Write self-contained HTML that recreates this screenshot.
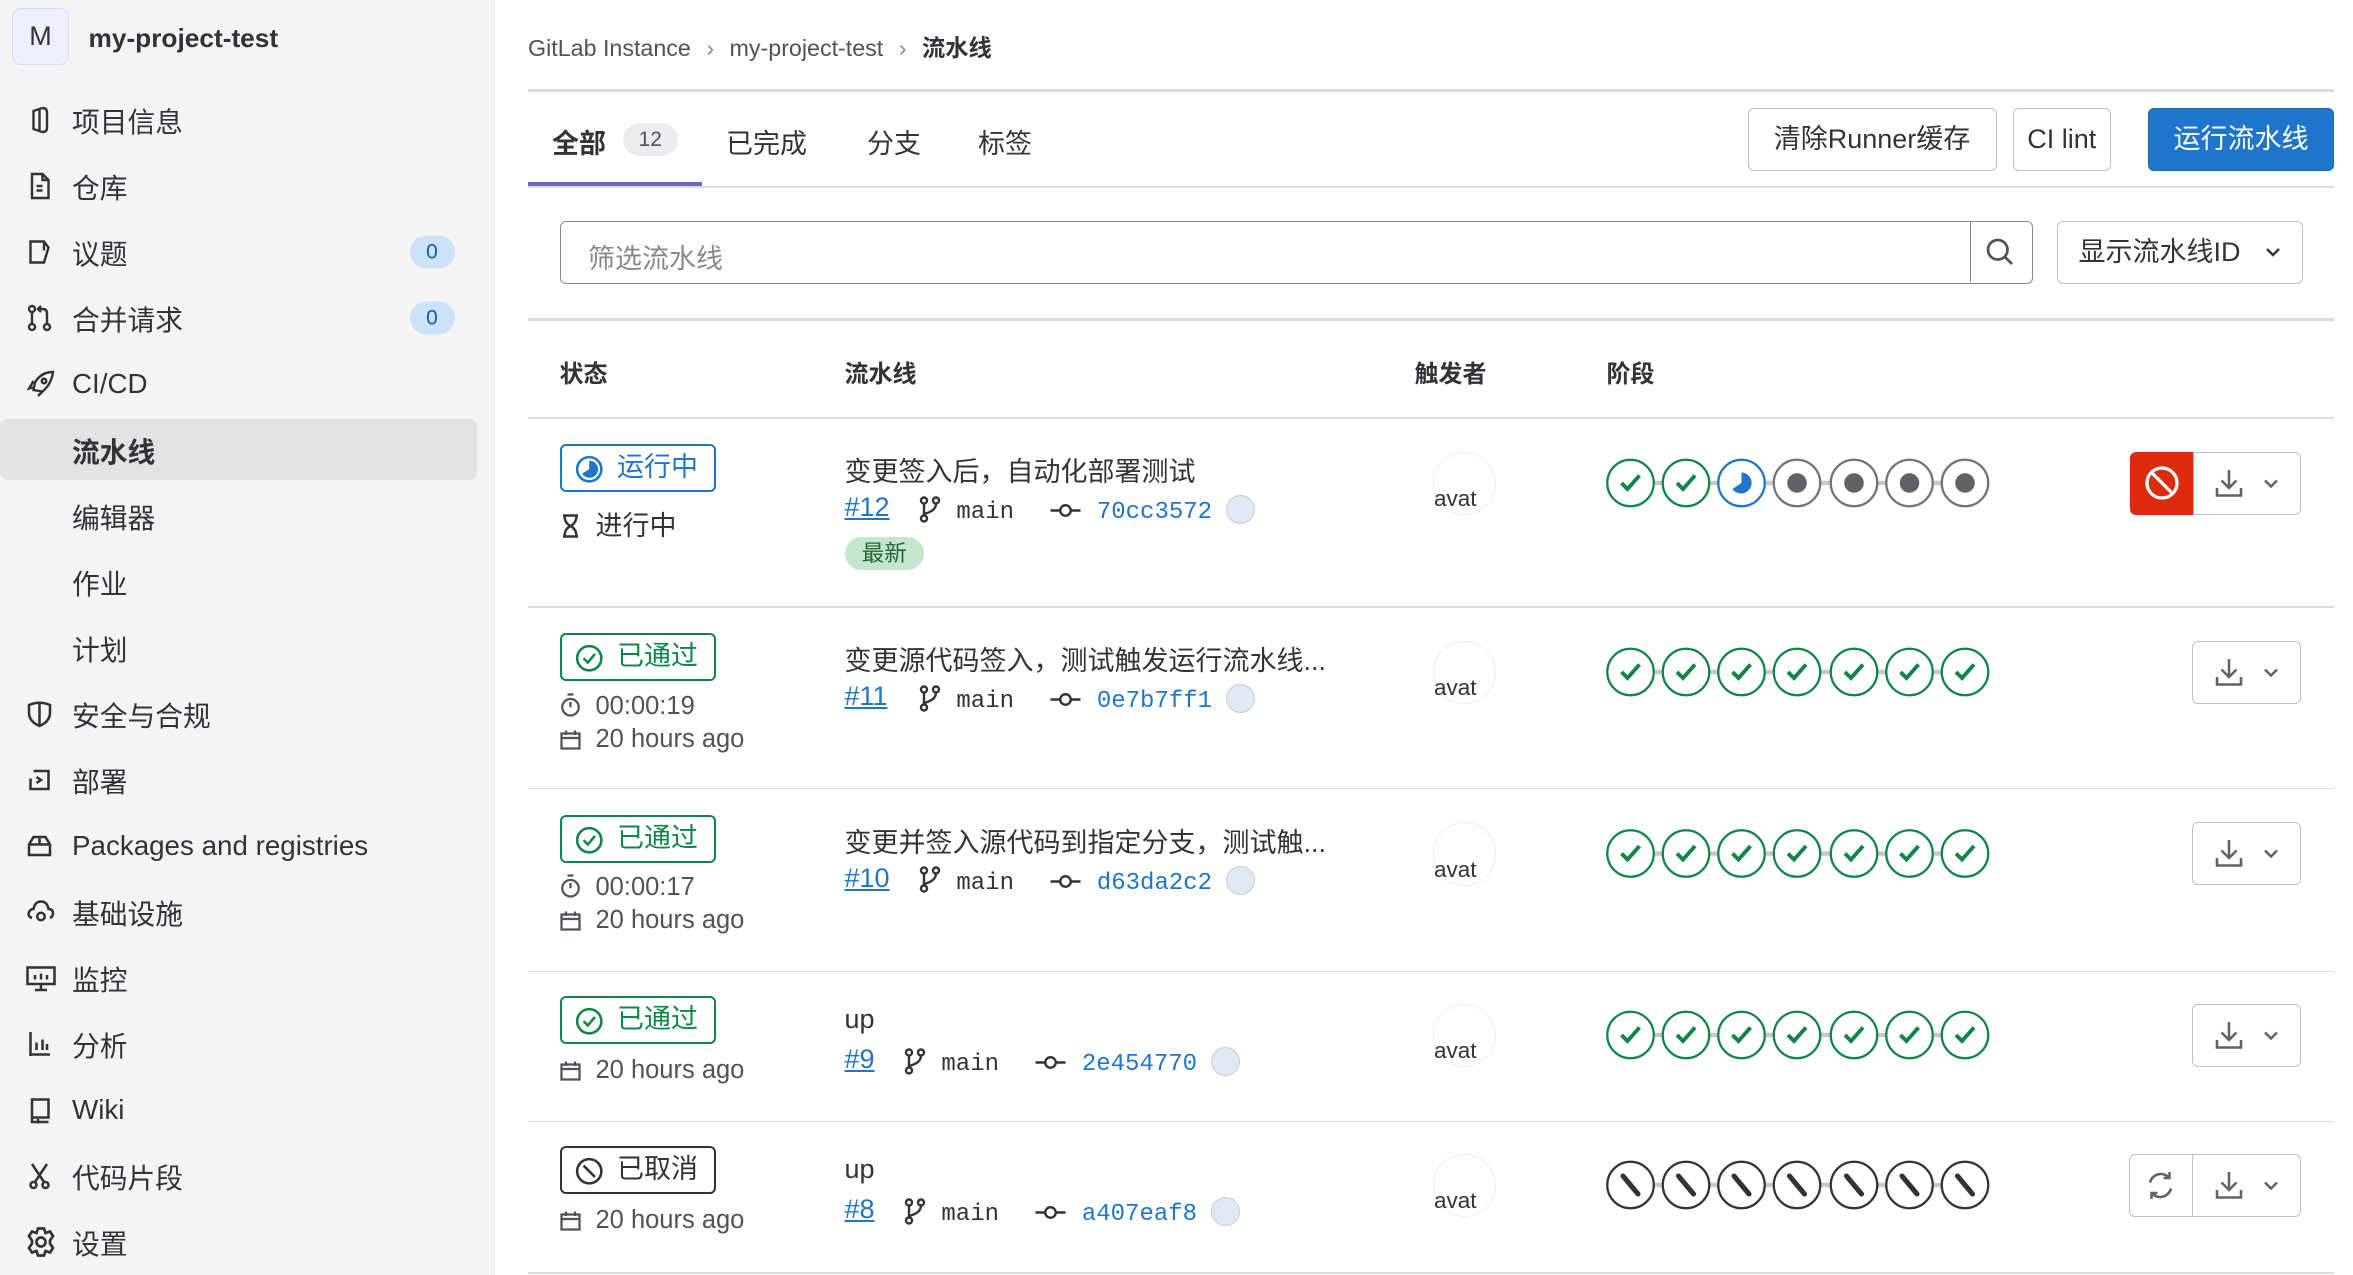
<!DOCTYPE html>
<html><head><meta charset="utf-8">
<style>
html{zoom:1.5}
body{margin:0;width:1569px;height:850px;overflow:hidden;background:#fff;font-family:"Liberation Sans","Noto Sans CJK SC",sans-serif;color:#333238;position:relative}
.a{position:absolute;white-space:nowrap}
.sb{position:absolute;left:0;top:0;width:329px;height:850px;background:#f4f4f4;border-right:1px solid #e8e8e8}
.nav{position:absolute;left:48px;font-size:18.5px;color:#333238;transform:translateY(-50%)}
.ic{position:absolute;left:17px;transform:translateY(-50%)}
.badge0{position:absolute;left:273px;width:30px;height:22px;border-radius:11px;background:#cbe2f9;color:#0b5cad;font-size:14px;text-align:center;line-height:22px;transform:translateY(-50%)}
.btn{position:absolute;border:1px solid #bfbfc3;border-radius:4px;background:#fff;font-size:18px;text-align:center;box-sizing:border-box}
.hl{position:absolute;left:352px;width:1204px;height:1px;background:#dcdcde}
.th{position:absolute;top:236px;font-size:16px;font-weight:bold}
.st{position:absolute;left:373px;width:104px;height:32px;box-sizing:border-box;border:1.5px solid;border-radius:4px;font-size:18px;line-height:29px}
.st svg{position:absolute;left:9px;top:6px}
.st span{position:absolute;left:37px}
.meta{position:absolute;left:373px;font-size:17px;color:#535158}
.meta svg{vertical-align:-2px;margin-right:10px}
.ttl{position:absolute;left:563px;font-size:18px;color:#333238}
.lk{position:absolute;left:563px;font-size:16.5px}
.lk a{color:#1f75cb;text-decoration:underline;font-family:"Liberation Sans",sans-serif;font-size:18px}
.mono{font-family:"Liberation Mono",monospace;font-size:16px}
.av{position:absolute;left:955px;width:41px;height:41px;border-radius:50%;border:1px solid #eee;overflow:hidden;font-size:15px}
.dl{position:absolute;left:1461px;width:73px;height:42px;border:1px solid #bfbfc3;border-radius:4px;box-sizing:border-box;background:#fff}
.ab{display:inline-block;width:18px;height:18px;border-radius:50%;background:#dfe9f3;border:1px solid #ccc;vertical-align:-4px}
</style></head><body>

<div class="sb"></div>
<div class="a" style="left:8px;top:5px;width:38px;height:38px;border-radius:6px;background:#eeeefc;border:1px solid #dcdcf0;box-sizing:border-box;text-align:center;line-height:37px;font-size:18px;color:#333">M</div>
<div class="a" style="left:59px;top:15px;font-size:17.5px;font-weight:bold;color:#333238">my-project-test</div>
<div class="a" style="left:0;top:279px;width:318px;height:41px;background:#e3e3e3;border-radius:5px"></div>

<svg class="ic" style="top:80px" width="18" height="18" viewBox="0 0 18 18" fill="none" stroke="#333" stroke-width="1.6"><path d="M5 3 L11 1 Q14 1 14 4 V14 Q14 17 11 17 L5 15 Z M9 2 V16"/></svg><div class="nav" style="top:80px">项目信息</div>
<svg class="ic" style="top:124px" width="18" height="18" viewBox="0 0 18 18" fill="none" stroke="#333" stroke-width="1.6"><path d="M4 1 H11 L15 5 V17 H4 Z M11 1 V5 H15 M7 9 H11 M7 12 H11"/></svg><div class="nav" style="top:124px">仓库</div>
<svg class="ic" style="top:168px" width="18" height="18" viewBox="0 0 18 18" fill="none" stroke="#333" stroke-width="1.6"><path d="M3 2 H12 L15 6 L12 16 H3 Z M12 2 V8"/></svg><div class="nav" style="top:168px">议题</div><div class="badge0" style="top:168px">0</div>
<svg class="ic" style="top:212px" width="18" height="18" viewBox="0 0 18 18" fill="none" stroke="#333" stroke-width="1.6"><circle cx="4" cy="3" r="2"/><circle cx="4" cy="15" r="2"/><circle cx="14" cy="15" r="2"/><path d="M4 5 V13 M14 13 V6 Q14 3 11 3 H9 M10 1 L8 3 L10 5"/></svg><div class="nav" style="top:212px">合并请求</div><div class="badge0" style="top:212px">0</div>
<svg class="ic" style="top:256px" width="20" height="20" viewBox="0 0 20 20" fill="none" stroke="#333" stroke-width="1.6"><path d="M18 2 Q10 2 6 9 L5 14 L11 15 Q17 10 18 2 Z M6 12 L2 13 L5 8 M11 15 L8 18"/><circle cx="12" cy="8" r="1.5"/></svg><div class="nav" style="top:256px">CI/CD</div>
<div class="nav" style="top:300px;font-weight:bold">流水线</div>
<div class="nav" style="top:344px">编辑器</div>
<div class="nav" style="top:388px">作业</div>
<div class="nav" style="top:432px">计划</div>
<svg class="ic" style="top:476px" width="18" height="18" viewBox="0 0 18 18" fill="none" stroke="#333" stroke-width="1.7"><path d="M2 3 Q9 0 16 3 V8 Q16 14 9 17 Q2 14 2 8 Z M9 2 V16"/></svg><div class="nav" style="top:476px">安全与合规</div>
<svg class="ic" style="top:520px" width="18" height="18" viewBox="0 0 18 18" fill="none" stroke="#333" stroke-width="1.7"><path d="M5 3 H15 V15 H3 V8 M7 7 L10 9 L7 11"/></svg><div class="nav" style="top:520px">部署</div>
<svg class="ic" style="top:564px" width="18" height="18" viewBox="0 0 18 18" fill="none" stroke="#333" stroke-width="1.7"><path d="M2 8 L5 3 H13 L16 8 V15 H2 Z M2 8 H16 M9 3 V8"/></svg><div class="nav" style="top:564px">Packages and registries</div>
<svg class="ic" style="top:608px" width="20" height="18" viewBox="0 0 20 18" fill="none" stroke="#333" stroke-width="1.7"><path d="M4 13 Q1 12 2 9 Q3 7 5 7 Q6 2 10 2 Q14 2 15 7 Q18 7 18 10 Q18 12 16 13"/><circle cx="10" cy="12" r="2.5"/></svg><div class="nav" style="top:608px">基础设施</div>
<svg class="ic" style="top:652px" width="20" height="18" viewBox="0 0 20 18" fill="none" stroke="#333" stroke-width="1.7"><path d="M1 2 H19 V13 H1 Z M6 17 H14 M10 13 V17 M6 10 V7 M10 10 V6 M14 10 V7"/></svg><div class="nav" style="top:652px">监控</div>
<svg class="ic" style="top:696px" width="18" height="18" viewBox="0 0 18 18" fill="none" stroke="#333" stroke-width="1.7"><path d="M3 1 V17 M3 16 H16 M7 13 V8 M11 13 V6 M14 13 V9"/></svg><div class="nav" style="top:696px">分析</div>
<svg class="ic" style="top:740px" width="18" height="18" viewBox="0 0 18 18" fill="none" stroke="#333" stroke-width="1.7"><path d="M4 2 H15 V14 H4 Z M4 14 V17 H15 M8 15 V18"/></svg><div class="nav" style="top:740px">Wiki</div>
<svg class="ic" style="top:784px" width="18" height="18" viewBox="0 0 18 18" fill="none" stroke="#333" stroke-width="1.7"><path d="M4 1 L12 13 M14 1 L6 13"/><circle cx="5" cy="15" r="2"/><circle cx="13" cy="15" r="2"/></svg><div class="nav" style="top:784px">代码片段</div>
<svg class="ic" style="top:828px" width="20" height="20" viewBox="0 0 20 20" fill="none" stroke="#333" stroke-width="1.8"><path d="M8 1 H12 L13 4 L16 3 L18 6 L16 9 V11 L18 14 L16 17 L13 16 L12 19 H8 L7 16 L4 17 L2 14 L4 11 V9 L2 6 L4 3 L7 4 Z"/><circle cx="10" cy="10" r="3"/></svg><div class="nav" style="top:828px">设置</div>

<div class="a" style="left:352px;top:19px;font-size:15.5px;color:#535158">GitLab Instance <span style="color:#89888d;margin:0 6px">›</span> my-project-test <span style="color:#89888d;margin:0 6px">›</span> <b style="color:#333238">流水线</b></div>
<div class="hl" style="top:59px;height:2px"></div>

<div class="a" style="left:368px;top:81px;font-size:18px;font-weight:bold">全部</div>
<div class="a" style="left:415px;top:82px;width:37px;height:22px;border-radius:11px;background:#ececef;font-size:14px;text-align:center;line-height:22px;color:#535158">12</div>
<div class="a" style="left:484px;top:81px;font-size:18px">已完成</div>
<div class="a" style="left:578px;top:81px;font-size:18px">分支</div>
<div class="a" style="left:652px;top:81px;font-size:18px">标签</div>
<div class="a" style="left:352px;top:121px;width:116px;height:3px;background:#6666c4"></div>
<div class="hl" style="top:124px"></div>
<div class="btn" style="left:1165px;top:72px;width:166px;height:42px;line-height:40px">清除Runner缓存</div>
<div class="btn" style="left:1342px;top:72px;width:65px;height:42px;line-height:40px">CI lint</div>
<div class="btn" style="left:1432px;top:72px;width:124px;height:42px;line-height:40px;background:#1f75cb;border-color:#1068bf;color:#fff">运行流水线</div>

<div class="a" style="left:373px;top:147px;width:982px;height:42px;border:1px solid #89888d;border-radius:4px;box-sizing:border-box"></div>
<div class="a" style="left:1313px;top:148px;width:1px;height:40px;background:#89888d"></div>
<div class="a" style="left:392px;top:158px;font-size:18px;color:#89888d">筛选流水线</div>
<svg class="a" style="left:1323px;top:158px" width="20" height="20" viewBox="0 0 20 20" fill="none" stroke="#535158" stroke-width="1.8"><circle cx="8.5" cy="8.5" r="6.5"/><path d="M13 13 L18 18"/></svg>
<div class="btn" style="left:1371px;top:147px;width:164px;height:42px;line-height:40px;text-align:left;padding-left:14px">显示流水线ID</div>
<svg class="a" style="left:1509px;top:162px" width="12" height="12" viewBox="0 0 12 12" fill="none" stroke="#333" stroke-width="1.6"><path d="M2 4 L6 8 L10 4"/></svg>

<div class="hl" style="top:212px;height:2px"></div>
<div class="th" style="left:373px">状态</div>
<div class="th" style="left:563px">流水线</div>
<div class="th" style="left:943px">触发者</div>
<div class="th" style="left:1071px">阶段</div>
<div class="hl" style="top:278px"></div>
<div class="hl" style="top:404px"></div>
<div class="hl" style="top:525px"></div>
<div class="hl" style="top:647px"></div>
<div class="hl" style="top:747px"></div>
<div class="hl" style="top:848px"></div>

<div class="st" style="top:296px;border-color:#1f75cb;color:#1f75cb"><svg width="19" height="19" viewBox="0 0 20 20"><circle cx="10" cy="10" r="8.5" fill="none" stroke="#1f75cb" stroke-width="1.8"/><path d="M10 4 A6 6 0 1 1 5 13 L10 10 Z" fill="#1f75cb"/></svg><span>运行中</span></div>
<div class="meta" style="top:336px;font-size:18px;color:#333238"><svg width="14" height="16" viewBox="0 0 14 16" fill="none" stroke="#333" stroke-width="1.6"><path d="M2 1 H12 M2 15 H12 M3 1 Q3 6 7 8 Q11 10 11 15 M11 1 Q11 6 7 8 Q3 10 3 15"/></svg>进行中</div>
<div class="ttl" style="top:300px">变更签入后，自动化部署测试</div>
<div class="lk" style="top:328px"><a>#12</a></div>
<div class="a" style="left:563px;top:358px;width:53px;height:22px;border-radius:11px;background:#c3e6cd;color:#24663b;font-size:15px;text-align:center;line-height:22px">最新</div>
<div class="av" style="top:301px"></div>

<div class="st" style="top:422px;border-color:#108548;color:#108548"><svg width="19" height="19" viewBox="0 0 20 20" fill="none" stroke="#108548" stroke-width="1.8"><circle cx="10" cy="10" r="8.5"/><path d="M6 10 L9 13 L14 7"/></svg><span>已通过</span></div>
<div class="ttl" style="top:426px">变更源代码签入，测试触发运行流水线...</div>
<div class="lk" style="top:454px"><a>#11</a></div>
<div class="av" style="top:427px"></div>

<div class="st" style="top:543px;border-color:#108548;color:#108548"><svg width="19" height="19" viewBox="0 0 20 20" fill="none" stroke="#108548" stroke-width="1.8"><circle cx="10" cy="10" r="8.5"/><path d="M6 10 L9 13 L14 7"/></svg><span>已通过</span></div>
<div class="ttl" style="top:547px">变更并签入源代码到指定分支，测试触...</div>
<div class="lk" style="top:575px"><a>#10</a></div>
<div class="av" style="top:548px"></div>

<div class="st" style="top:664px;border-color:#108548;color:#108548"><svg width="19" height="19" viewBox="0 0 20 20" fill="none" stroke="#108548" stroke-width="1.8"><circle cx="10" cy="10" r="8.5"/><path d="M6 10 L9 13 L14 7"/></svg><span>已通过</span></div>
<div class="ttl" style="top:669px">up</div>
<div class="lk" style="top:696px"><a>#9</a></div>
<div class="av" style="top:669px"></div>

<div class="st" style="top:764px;border-color:#333238;color:#333238"><svg width="19" height="19" viewBox="0 0 20 20" fill="none" stroke="#333238" stroke-width="1.8"><circle cx="10" cy="10" r="8.5"/><path d="M6 6 L14 14"/></svg><span>已取消</span></div>
<div class="ttl" style="top:769px">up</div>
<div class="lk" style="top:796px"><a>#8</a></div>
<div class="av" style="top:769px"></div>

<div class="meta" style="top:461px"><svg width="14" height="16" viewBox="0 0 14 16" fill="none" stroke="#535158" stroke-width="1.5"><circle cx="7" cy="9.5" r="5.5"/><path d="M5 1 H9 M7 9.5 V6"/></svg>00:00:19</div>
<div class="meta" style="top:483px"><svg width="14" height="14" viewBox="0 0 14 14" fill="none" stroke="#535158" stroke-width="1.5"><path d="M1 3 H13 V13 H1 Z M1 6 H13 M4 1 V4 M10 1 V4"/></svg>20 hours ago</div>
<div class="meta" style="top:582px"><svg width="14" height="16" viewBox="0 0 14 16" fill="none" stroke="#535158" stroke-width="1.5"><circle cx="7" cy="9.5" r="5.5"/><path d="M5 1 H9 M7 9.5 V6"/></svg>00:00:17</div>
<div class="meta" style="top:604px"><svg width="14" height="14" viewBox="0 0 14 14" fill="none" stroke="#535158" stroke-width="1.5"><path d="M1 3 H13 V13 H1 Z M1 6 H13 M4 1 V4 M10 1 V4"/></svg>20 hours ago</div>
<div class="meta" style="top:704px"><svg width="14" height="14" viewBox="0 0 14 14" fill="none" stroke="#535158" stroke-width="1.5"><path d="M1 3 H13 V13 H1 Z M1 6 H13 M4 1 V4 M10 1 V4"/></svg>20 hours ago</div>
<div class="meta" style="top:804px"><svg width="14" height="14" viewBox="0 0 14 14" fill="none" stroke="#535158" stroke-width="1.5"><path d="M1 3 H13 V13 H1 Z M1 6 H13 M4 1 V4 M10 1 V4"/></svg>20 hours ago</div>

<div class="a mono" style="left:612px;top:330px"><svg width="16" height="18" viewBox="0 0 16 18" fill="none" stroke="#333" stroke-width="1.6" style="vertical-align:-3px"><circle cx="4" cy="3" r="2"/><circle cx="12" cy="3" r="2"/><circle cx="4" cy="15" r="2"/><path d="M4 5 V13 M12 5 Q12 10 4 12"/></svg> main <svg width="22" height="10" viewBox="0 0 22 10" fill="none" stroke="#333" stroke-width="1.6" style="margin-left:14px;vertical-align:0"><circle cx="11" cy="5" r="3.5"/><path d="M1 5 H7.5 M14.5 5 H21"/></svg> <span style="color:#1f75cb">70cc3572</span> <span class="ab"></span></div>
<div class="a mono" style="left:612px;top:456px"><svg width="16" height="18" viewBox="0 0 16 18" fill="none" stroke="#333" stroke-width="1.6" style="vertical-align:-3px"><circle cx="4" cy="3" r="2"/><circle cx="12" cy="3" r="2"/><circle cx="4" cy="15" r="2"/><path d="M4 5 V13 M12 5 Q12 10 4 12"/></svg> main <svg width="22" height="10" viewBox="0 0 22 10" fill="none" stroke="#333" stroke-width="1.6" style="margin-left:14px;vertical-align:0"><circle cx="11" cy="5" r="3.5"/><path d="M1 5 H7.5 M14.5 5 H21"/></svg> <span style="color:#1f75cb">0e7b7ff1</span> <span class="ab"></span></div>
<div class="a mono" style="left:612px;top:577px"><svg width="16" height="18" viewBox="0 0 16 18" fill="none" stroke="#333" stroke-width="1.6" style="vertical-align:-3px"><circle cx="4" cy="3" r="2"/><circle cx="12" cy="3" r="2"/><circle cx="4" cy="15" r="2"/><path d="M4 5 V13 M12 5 Q12 10 4 12"/></svg> main <svg width="22" height="10" viewBox="0 0 22 10" fill="none" stroke="#333" stroke-width="1.6" style="margin-left:14px;vertical-align:0"><circle cx="11" cy="5" r="3.5"/><path d="M1 5 H7.5 M14.5 5 H21"/></svg> <span style="color:#1f75cb">d63da2c2</span> <span class="ab"></span></div>
<div class="a mono" style="left:602px;top:698px"><svg width="16" height="18" viewBox="0 0 16 18" fill="none" stroke="#333" stroke-width="1.6" style="vertical-align:-3px"><circle cx="4" cy="3" r="2"/><circle cx="12" cy="3" r="2"/><circle cx="4" cy="15" r="2"/><path d="M4 5 V13 M12 5 Q12 10 4 12"/></svg> main <svg width="22" height="10" viewBox="0 0 22 10" fill="none" stroke="#333" stroke-width="1.6" style="margin-left:14px;vertical-align:0"><circle cx="11" cy="5" r="3.5"/><path d="M1 5 H7.5 M14.5 5 H21"/></svg> <span style="color:#1f75cb">2e454770</span> <span class="ab"></span></div>
<div class="a mono" style="left:602px;top:798px"><svg width="16" height="18" viewBox="0 0 16 18" fill="none" stroke="#333" stroke-width="1.6" style="vertical-align:-3px"><circle cx="4" cy="3" r="2"/><circle cx="12" cy="3" r="2"/><circle cx="4" cy="15" r="2"/><path d="M4 5 V13 M12 5 Q12 10 4 12"/></svg> main <svg width="22" height="10" viewBox="0 0 22 10" fill="none" stroke="#333" stroke-width="1.6" style="margin-left:14px;vertical-align:0"><circle cx="11" cy="5" r="3.5"/><path d="M1 5 H7.5 M14.5 5 H21"/></svg> <span style="color:#1f75cb">a407eaf8</span> <span class="ab"></span></div>

<div class="a" style="left:956px;top:324px;font-size:15px;color:#333">avat</div>
<div class="a" style="left:956px;top:450px;font-size:15px;color:#333">avat</div>
<div class="a" style="left:956px;top:571px;font-size:15px;color:#333">avat</div>
<div class="a" style="left:956px;top:692px;font-size:15px;color:#333">avat</div>
<div class="a" style="left:956px;top:792px;font-size:15px;color:#333">avat</div>

<svg class="a" style="left:1068px;top:300px" width="280" height="510" viewBox="0 0 280 510">
<defs>
<g id="ok"><circle r="15.5" fill="#fff" stroke="#108548" stroke-width="1.5"/><path d="M-6 0 L-2 4 L6 -5" fill="none" stroke="#108548" stroke-width="2.6"/></g>
<g id="cx"><circle r="15.5" fill="#fff" stroke="#333238" stroke-width="1.5"/><path d="M-5 -6 L5 6" stroke="#333238" stroke-width="3.4" stroke-linecap="round"/></g>
<g id="cr"><circle r="15.5" fill="#fff" stroke="#737278" stroke-width="1.5"/><circle r="6.5" fill="#626168"/></g>
<g id="run"><circle r="15.5" fill="#fff" stroke="#1f75cb" stroke-width="1.5"/><path d="M0 -7 A7 7 0 1 1 -6 4 L0 0 Z" fill="#1f75cb"/></g>
</defs>
<g fill="none" stroke="#c9c9cc" stroke-width="3"><path d="M19 22 H242 M19 148 H242 M19 269 H242 M19 390 H242 M19 490 H242"/></g>
<use href="#ok" x="19" y="22"/><use href="#ok" x="56" y="22"/><use href="#run" x="93" y="22"/><use href="#cr" x="130" y="22"/><use href="#cr" x="168" y="22"/><use href="#cr" x="205" y="22"/><use href="#cr" x="242" y="22"/>
<use href="#ok" x="19" y="148"/><use href="#ok" x="56" y="148"/><use href="#ok" x="93" y="148"/><use href="#ok" x="130" y="148"/><use href="#ok" x="168" y="148"/><use href="#ok" x="205" y="148"/><use href="#ok" x="242" y="148"/>
<use href="#ok" x="19" y="269"/><use href="#ok" x="56" y="269"/><use href="#ok" x="93" y="269"/><use href="#ok" x="130" y="269"/><use href="#ok" x="168" y="269"/><use href="#ok" x="205" y="269"/><use href="#ok" x="242" y="269"/>
<use href="#ok" x="19" y="390"/><use href="#ok" x="56" y="390"/><use href="#ok" x="93" y="390"/><use href="#ok" x="130" y="390"/><use href="#ok" x="168" y="390"/><use href="#ok" x="205" y="390"/><use href="#ok" x="242" y="390"/>
<use href="#cx" x="19" y="490"/><use href="#cx" x="56" y="490"/><use href="#cx" x="93" y="490"/><use href="#cx" x="130" y="490"/><use href="#cx" x="168" y="490"/><use href="#cx" x="205" y="490"/><use href="#cx" x="242" y="490"/>
</svg>

<div class="a" style="left:1420px;top:301px;width:43px;height:42px;background:#dd2b0e;border-radius:4px 0 0 4px"></div>
<svg class="a" style="left:1429px;top:310px" width="24" height="24" viewBox="0 0 24 24" fill="none" stroke="#fff" stroke-width="2.2"><circle cx="12" cy="12" r="10"/><path d="M5 5 L19 19"/></svg>
<div class="dl" style="top:301px;left:1462px;width:72px;border-radius:0 4px 4px 0"></div>
<div class="dl" style="top:427px"></div>
<div class="dl" style="top:548px"></div>
<div class="dl" style="top:669px"></div>
<div class="a" style="left:1419px;top:769px;width:43px;height:42px;border:1px solid #bfbfc3;border-radius:4px 0 0 4px;box-sizing:border-box"></div>
<div class="dl" style="top:769px;border-radius:0 4px 4px 0;left:1461px"></div>
<svg class="a" style="left:1429px;top:779px" width="22" height="22" viewBox="0 0 22 22" fill="none" stroke="#626168" stroke-width="1.7"><path d="M4 9 A7.5 7.5 0 0 1 17 6 M18 13 A7.5 7.5 0 0 1 5 16 M17 2 V6 H13 M5 20 V16 H9"/></svg>
<svg class="a" style="left:1476px;top:311px" width="45" height="22" viewBox="0 0 45 22" fill="none" stroke="#626168" stroke-width="1.7"><path d="M10 2 V14 M5 9 L10 14 L15 9 M2 14 V19 H18 V14 M34 9 L38 13 L42 9"/></svg>
<svg class="a" style="left:1476px;top:437px" width="45" height="22" viewBox="0 0 45 22" fill="none" stroke="#626168" stroke-width="1.7"><path d="M10 2 V14 M5 9 L10 14 L15 9 M2 14 V19 H18 V14 M34 9 L38 13 L42 9"/></svg>
<svg class="a" style="left:1476px;top:558px" width="45" height="22" viewBox="0 0 45 22" fill="none" stroke="#626168" stroke-width="1.7"><path d="M10 2 V14 M5 9 L10 14 L15 9 M2 14 V19 H18 V14 M34 9 L38 13 L42 9"/></svg>
<svg class="a" style="left:1476px;top:679px" width="45" height="22" viewBox="0 0 45 22" fill="none" stroke="#626168" stroke-width="1.7"><path d="M10 2 V14 M5 9 L10 14 L15 9 M2 14 V19 H18 V14 M34 9 L38 13 L42 9"/></svg>
<svg class="a" style="left:1476px;top:779px" width="45" height="22" viewBox="0 0 45 22" fill="none" stroke="#626168" stroke-width="1.7"><path d="M10 2 V14 M5 9 L10 14 L15 9 M2 14 V19 H18 V14 M34 9 L38 13 L42 9"/></svg>

</body></html>
